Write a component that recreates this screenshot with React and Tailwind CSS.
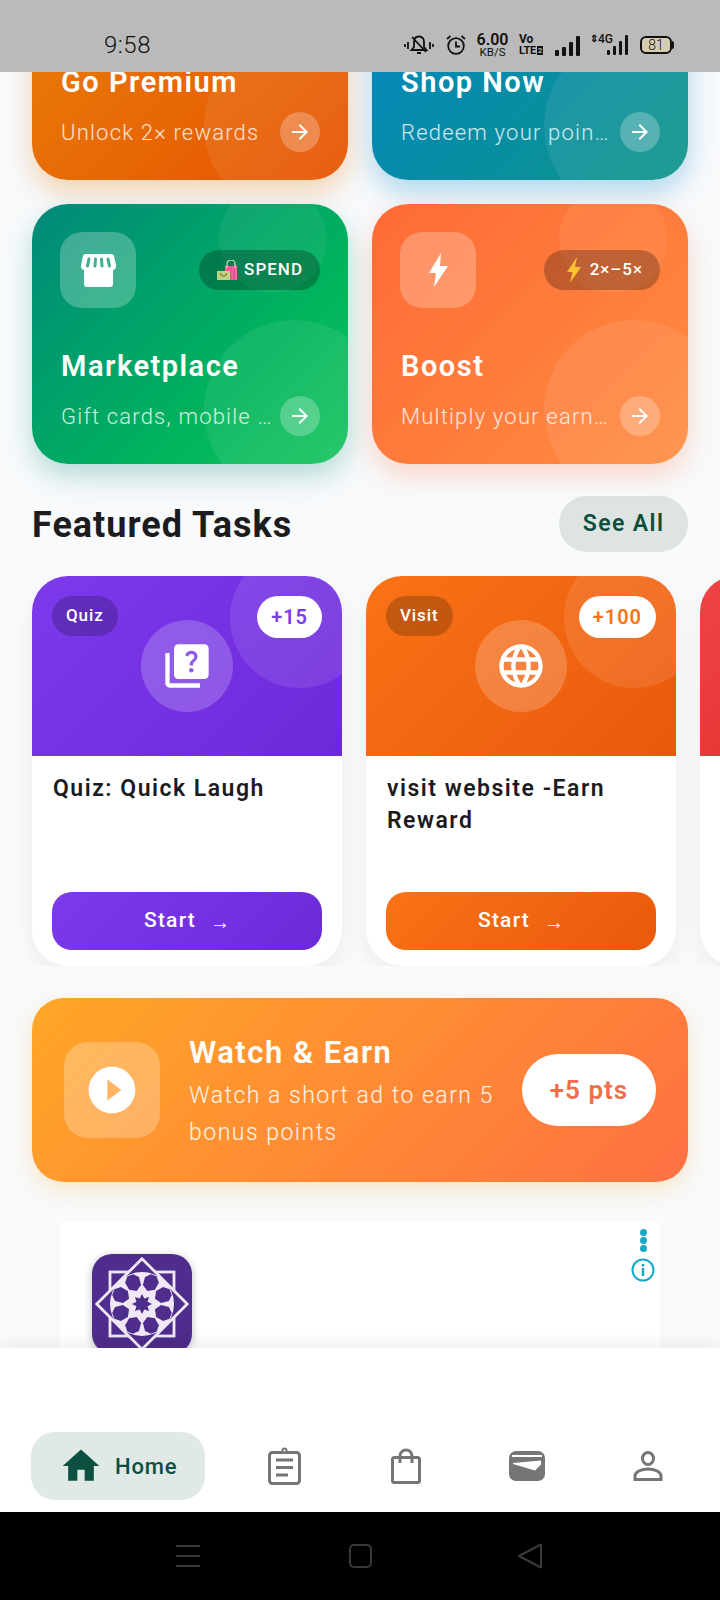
import {
  MdArrowForward,
  MdHome,
  MdLanguage,
  MdPlayCircleFilled,
  MdQuiz,
} from "react-icons/md";

function Bars({ heights, bar = "w-[4px]" }) {
  return (
    <div className="flex items-end gap-[3px]">
      {heights.map((h, i) => (
        <div key={i} className={`${bar} rounded-[1px] bg-[#111]`} style={{ height: h }} />
      ))}
    </div>
  );
}

function StatusBar() {
  return (
    <div className="relative z-20 flex h-[72px] shrink-0 items-center bg-[#b9bab9] pl-[104px] pr-[46px] pt-[18px] text-[#111]">
      <span className="text-[24px] font-light leading-none tracking-[0.5px]">9:58</span>
      <div className="ml-auto flex items-center">
        <svg viewBox="0 0 30 20" className="h-[20px] w-[30px]" fill="none" stroke="#111" strokeWidth="1.8">
          <path d="M1 9v3M4 7v7M26 7v7M29 9v3" />
          <path d="M15 1.500c-3.500 0-5 2.500-5 5.500v5l-2.500 3h15L20 12V7c0-3-1.500-5.500-5-5.500zM13 18h4M8 2l14 15" />
        </svg>
        <svg viewBox="0 0 20 20" className="ml-[12px] h-[20px] w-[20px]" fill="none" stroke="#111" strokeWidth="1.8">
          <circle cx="10" cy="11" r="7.800" />
          <path d="M10 6.500V11.500H14M1 4l3.500-3M19 4l-3.500-3" />
        </svg>
        <div className="ml-[10px] flex w-[33px] flex-col items-center">
          <span className="text-[16px] font-semibold leading-[14px]">6.00</span>
          <span className="text-[11.5px] leading-[11px]">KB/S</span>
        </div>
        <div className="ml-[10px] flex w-[25px] flex-col font-bold">
          <span className="text-[12px] leading-[11px]">Vo</span>
          <span className="flex items-center text-[11px] leading-[11px] tracking-[-0.3px]">
            LTE
            <span className="ml-[1px] bg-[#111] px-[1px] text-[8px] leading-[9px] text-[#b9bab9]">2</span>
          </span>
        </div>
        <div className="ml-[11px] mt-[2px]">
          <Bars heights={[6, 9, 14, 20]} />
        </div>
        <div className="relative ml-[10px] flex h-[20px] w-[38px] items-end justify-end">
          <span className="absolute left-0 top-[-2px] text-[10px] font-bold leading-[12px]">⇕</span>
          <span className="absolute left-[8px] top-[-2px] text-[12px] font-medium leading-[12px]">4G</span>
          <Bars heights={[5, 9, 14, 20]} bar="w-[3px]" />
        </div>
        <div className="ml-[12px] flex items-center">
          <div className="flex h-[18px] w-[32px] items-center justify-center rounded-[6px] border-2 border-[#111] bg-[#d5cdb0] text-[14px] font-light leading-none">
            81
          </div>
          <div className="h-[8px] w-[2px] rounded-r-[2px] bg-[#111]" />
        </div>
      </div>
    </div>
  );
}

function ActionCard({ title, sub, icon, badge, className }) {
  return (
    <div className={`relative flex h-[260px] flex-col overflow-hidden rounded-[36px] p-[28px] text-white ${className}`}>
      <div className="absolute right-[21px] top-[-19px] h-[108px] w-[108px] rounded-full bg-white/[0.06]" />
      <div className="absolute bottom-[-36px] right-[-36px] h-[180px] w-[180px] rounded-full bg-white/[0.08]" />
      <div className="relative flex h-[76px] items-center justify-between">
        {icon && (
          <div className="flex h-[76px] w-[76px] items-center justify-center rounded-[22px] bg-white/25">{icon}</div>
        )}
        {badge}
      </div>
      <div className="relative mt-auto pl-[1px] text-[29px] font-semibold leading-[34px] tracking-[1.5px]">{title}</div>
      <div className="relative mt-[13px] flex h-[40px] items-center gap-[8px]">
        <div className="min-w-0 flex-1 truncate pl-[1px] text-[22px] font-light tracking-[1.2px] text-white/80">{sub}</div>
        <div className="flex h-[40px] w-[40px] shrink-0 items-center justify-center rounded-full bg-white/25">
          <MdArrowForward className="h-[24px] w-[24px]" />
        </div>
      </div>
    </div>
  );
}

function TaskCard({ tag, points, title, icon, head, btn, pointsColor }) {
  return (
    <div className="relative flex h-[390px] w-[310px] shrink-0 flex-col overflow-hidden rounded-[36px] bg-white shadow-[0_8px_24px_rgba(0,0,0,0.06)]">
      <div className={`relative h-[180px] shrink-0 overflow-hidden ${head}`}>
        <div className="absolute right-[-28px] top-[-28px] h-[140px] w-[140px] rounded-full bg-white/10" />
        {tag && (
          <div className="absolute left-[20px] top-[20px] flex h-[40px] items-center rounded-full bg-black/20 px-[14px] text-[17px] font-medium tracking-[0.9px] text-white">
            {tag}
          </div>
        )}
        {points && (
          <div className={`absolute right-[20px] top-[20px] flex h-[42px] items-center rounded-full bg-white px-[14px] text-[20px] font-semibold tracking-[1px] ${pointsColor}`}>
            {points}
          </div>
        )}
        {icon && (
          <div className="absolute left-[109px] top-[44px] flex h-[92px] w-[92px] items-center justify-center rounded-full bg-white/20 text-white">
            {icon}
          </div>
        )}
      </div>
      {title && (
        <div className="flex flex-1 flex-col px-[20px] pb-[16px] pt-[17px]">
          <div className="pl-[1px] text-[23px] font-semibold leading-[32px] tracking-[1.5px] text-[#1c1c1e]">{title}</div>
          <div className={`mt-auto flex h-[58px] items-center justify-center gap-[14px] rounded-[20px] text-[21px] font-medium tracking-[1.2px] text-white ${btn}`}>
            <span>Start</span>
            <span className="mt-[1px] font-['Liberation_Sans',sans-serif] text-[20px] tracking-normal">→</span>
          </div>
        </div>
      )}
    </div>
  );
}

function StarLogo() {
  const angles = [0, 45, 90, 135, 180, 225, 270, 315];
  const star = [];
  for (let i = 0; i < 16; i++) {
    const r = i % 2 ? 6 : 10;
    const a = (i * 22.5 * Math.PI) / 180;
    star.push(`${50 + r * Math.cos(a)},${50 + r * Math.sin(a)}`);
  }
  return (
    <svg viewBox="0 0 100 100" className="h-full w-full">
      <rect width="100" height="100" fill="#4f2d8c" />
      <g fill="#4f2d8c" stroke="#f0e8f6" strokeWidth="2.800">
        <rect x="18" y="18" width="64" height="64" />
        <rect x="18" y="18" width="64" height="64" transform="rotate(45 50 50)" />
      </g>
      <circle cx="50" cy="50" r="32" fill="#f0e8f6" />
      {angles.map((a) => (
        <polygon
          key={a}
          points="64,50 68,43.500 76,42.500 81,47 81,53 76,57.500 68,56.500"
          fill="#4f2d8c"
          transform={`rotate(${a + 22.5} 50 50)`}
        />
      ))}
      <polygon points={star.join(" ")} fill="#4f2d8c" />
    </svg>
  );
}

function SpendBags() {
  return (
    <svg viewBox="0 0 20 20" className="h-[20px] w-[20px] shrink-0">
      <rect x="8" y="6" width="12" height="14" fill="#ee6a9f" />
      <path d="M11 6V20M14 6V20M17 6V20" stroke="#d14d87" strokeWidth="1" />
      <path d="M10 8V4a4 4 0 0 1 8 0v4" fill="none" stroke="#d9e6c0" strokeWidth="1.200" />
      <rect x="0" y="11" width="13" height="9" fill="#bcd67e" />
      <path d="M3.500 13a3 3 0 0 0 6 0" fill="none" stroke="#9a6b4f" strokeWidth="1.200" />
    </svg>
  );
}

function BoltEmoji() {
  return (
    <svg viewBox="0 0 16 26" className="ml-[3px] h-[26px] w-[18px] shrink-0">
      <path d="M11 0 1 15h5.500L4 26 15 10H9l2-10z" fill="#fbc02d" />
    </svg>
  );
}

function Badge({ children }) {
  return (
    <div className="flex h-[40px] items-center gap-[7px] rounded-full bg-black/25 pl-[18px] pr-[17px] text-[17px] font-medium tracking-[1px] text-white">
      {children}
    </div>
  );
}

function StoreIcon() {
  return (
    <svg viewBox="0 0 35 33" className="h-[33px] w-[35px]" fill="#fff">
      <path d="M5 0h25a3 3 0 0 1 3 2l2 9a4 4 0 0 1-3 5v14a3 3 0 0 1-3 3H6a3 3 0 0 1-3-3V16a4 4 0 0 1-3-5l2-9a3 3 0 0 1 3-2z" />
      <path d="M8 5 6.500 12M14.500 5l-.500 7M20.500 5l.500 7M27 5l1.500 7" stroke="#46ad90" strokeWidth="3" strokeLinecap="round" />
    </svg>
  );
}

function BoltIcon() {
  return (
    <svg viewBox="0 0 19 34" className="h-[34px] w-[19px]" fill="#fff">
      <path d="M12 0 0 20h7L5 34l14-21h-8l1-13z" strokeLinejoin="round" />
    </svg>
  );
}

function ClipboardIcon() {
  return (
    <svg viewBox="0 0 33 38" className="h-[38px] w-[33px]" fill="none" stroke="#757575" strokeWidth="3">
      <rect x="1.500" y="5.500" width="30" height="31" rx="3" />
      <circle cx="16.500" cy="3.500" r="2" fill="#fff" strokeWidth="2" />
      <path d="M8 13h17M8 20.500h17M8 28h12" />
    </svg>
  );
}

function BagIcon() {
  return (
    <svg viewBox="0 0 30 36" className="h-[36px] w-[30px]" fill="none" stroke="#757575" strokeWidth="3">
      <rect x="1.500" y="9.500" width="27" height="25" rx="2" />
      <path d="M9 15V8a6 6 0 0 1 12 0v7" />
    </svg>
  );
}

function WalletIcon() {
  return (
    <svg viewBox="0 0 36 30" className="h-[30px] w-[36px]">
      <rect width="36" height="30" rx="7" fill="#757575" />
      <path d="M3 5h30" stroke="#fff" strokeWidth="2" />
      <path d="M4 12 32 9.500v4l-6 6L4 13z" fill="#fff" />
    </svg>
  );
}

function PersonIcon() {
  return (
    <svg viewBox="0 0 30 30" className="h-[30px] w-[30px]" fill="none" stroke="#757575" strokeWidth="3">
      <ellipse cx="15" cy="7.500" rx="5.500" ry="6" />
      <path d="M2 28.500V25c0-4 6-7 13-7s13 3 13 7v3.500z" />
    </svg>
  );
}

function InfoIcon() {
  return (
    <svg viewBox="0 0 24 24" className="mt-[5px] h-[24px] w-[24px]" fill="none" stroke="#13a9c9" strokeWidth="2">
      <circle cx="12" cy="12" r="10.500" />
      <path d="M12 10v8M12 6v2.500" strokeWidth="2.500" />
    </svg>
  );
}

export default function App() {
  return (
    <div className="relative flex h-[1600px] w-[720px] flex-col overflow-hidden bg-white font-['Roboto',sans-serif]">
      <StatusBar />

      <div className="h-[1276px] shrink-0 overflow-hidden bg-[#f8fafc]">
        <div className="mx-8 -mt-[152px] grid grid-cols-2 gap-6">
          <ActionCard
            title="Go Premium"
            sub="Unlock 2× rewards"
            className="bg-[linear-gradient(135deg,#e8850c,#e65100)] shadow-[0_12px_28px_rgba(230,120,0,0.3)]"
          />
          <ActionCard
            title="Shop Now"
            sub="Redeem your points today"
            className="bg-[linear-gradient(135deg,#0284c7,#0d9488)] shadow-[0_12px_28px_rgba(2,132,199,0.3)]"
          />
          <ActionCard
            title="Marketplace"
            sub="Gift cards, mobile top-ups"
            icon={<StoreIcon />}
            badge={
              <Badge>
                <SpendBags />
                SPEND
              </Badge>
            }
            className="bg-[linear-gradient(135deg,#00897b,#00b35c_65%,#16c45e)] shadow-[0_12px_28px_rgba(0,137,123,0.28)]"
          />
          <ActionCard
            title="Boost"
            sub="Multiply your earnings"
            icon={<BoltIcon />}
            badge={
              <Badge>
                <BoltEmoji />
                2×–5×
              </Badge>
            }
            className="bg-[linear-gradient(135deg,#ff6b35,#ff8c42)] shadow-[0_12px_28px_rgba(255,107,53,0.25)]"
          />
        </div>

        <div className="mx-8 mt-8 flex h-[56px] items-center justify-between">
          <h2 className="mt-[2px] text-[36px] font-bold leading-none tracking-[1px] text-[#1c1c1e]">Featured Tasks</h2>
          <div className="flex h-[56px] w-[129px] items-center justify-center rounded-full bg-[#dde4e2] text-[23px] font-semibold tracking-[1.4px] text-[#0b4f3c]">
            See All
          </div>
        </div>

        <div className="mt-6 flex gap-6 overflow-hidden pl-8">
          <TaskCard
            tag="Quiz"
            points="+15"
            title="Quiz: Quick Laugh"
            icon={<MdQuiz className="h-[52px] w-[52px]" />}
            head="bg-[linear-gradient(135deg,#7c3aed,#6d28d9)]"
            btn="bg-[linear-gradient(135deg,#7c3aed,#6d28d9)]"
            pointsColor="text-[#7c3aed]"
          />
          <TaskCard
            tag="Visit"
            points="+100"
            title="visit website -Earn Reward"
            icon={<MdLanguage className="h-[52px] w-[52px]" />}
            head="bg-[linear-gradient(135deg,#f97316,#ea580c)]"
            btn="bg-[linear-gradient(135deg,#f97316,#ea580c)]"
            pointsColor="text-[#f97316]"
          />
          <TaskCard head="bg-[linear-gradient(135deg,#ef4444,#dc2626)]" />
        </div>

        <div className="mx-8 mt-8 flex h-[184px] items-center rounded-[32px] bg-[linear-gradient(135deg,#ffa726,#ff7043)] px-8 text-white shadow-[0_8px_24px_rgba(255,167,38,0.25)]">
          <div className="mr-[29px] flex h-[96px] w-[96px] shrink-0 items-center justify-center rounded-[24px] bg-white/25">
            <MdPlayCircleFilled className="h-[56px] w-[56px]" />
          </div>
          <div className="w-[320px] shrink-0">
            <div className="mt-[6px] text-[31px] font-semibold leading-[36px] tracking-[1.5px]">Watch &amp; Earn</div>
            <div className="mt-[6px] text-[23px] font-light leading-[37px] tracking-[1.5px] text-white/90">
              Watch a short ad to earn 5 bonus points
            </div>
          </div>
          <div className="ml-auto flex h-[72px] w-[134px] shrink-0 items-center justify-center rounded-full bg-white text-[26px] font-semibold tracking-[1px] text-[#f06e4a]">
            +5 pts
          </div>
        </div>

        <div className="relative mx-[60px] mt-10 h-[160px] bg-white pl-8 pt-8">
          <div className="h-[100px] w-[100px] overflow-hidden rounded-[20px] shadow-[0_2px_8px_rgba(0,0,0,0.25)]">
            <StarLogo />
          </div>
          <div className="absolute right-[5px] top-[6px] flex w-[24px] flex-col items-center">
            <div className="flex flex-col gap-[1px] py-[1px]">
              <div className="h-[7px] w-[7px] rounded-full bg-[#13a9c9]" />
              <div className="h-[7px] w-[7px] rounded-full bg-[#13a9c9]" />
              <div className="h-[7px] w-[7px] rounded-full bg-[#13a9c9]" />
            </div>
            <InfoIcon />
          </div>
        </div>
      </div>

      <div className="relative z-10 flex h-[164px] shrink-0 items-center bg-white pl-[31px] pt-[72px] shadow-[0_-6px_18px_rgba(0,0,0,0.06)]">
        <div className="flex h-[68px] w-[174px] items-center gap-[12px] rounded-[24px] bg-[#e0e9e6] pl-[28px] text-[#0b5040]">
          <MdHome className="h-[44px] w-[44px] shrink-0" />
          <span className="text-[22px] font-medium tracking-[0.8px]">Home</span>
        </div>
        <div className="ml-[19px] flex w-[121px] justify-center">
          <ClipboardIcon />
        </div>
        <div className="flex w-[121px] justify-center">
          <BagIcon />
        </div>
        <div className="flex w-[121px] justify-center">
          <WalletIcon />
        </div>
        <div className="flex w-[121px] justify-center">
          <PersonIcon />
        </div>
      </div>

      <div className="relative flex h-[88px] shrink-0 items-center bg-black pl-[176px]">
        <div className="flex w-[24px] flex-col gap-[8px]">
          <div className="h-[2px] bg-[#3a3a3a]" />
          <div className="h-[2px] bg-[#3a3a3a]" />
          <div className="h-[2px] bg-[#3a3a3a]" />
        </div>
        <div className="ml-[149px] h-[24px] w-[23px] rounded-[5px] border-2 border-[#3a3a3a]" />
        <svg viewBox="0 0 26 26" className="ml-[145px] h-[26px] w-[26px]" fill="none" stroke="#3a3a3a" strokeWidth="2" strokeLinejoin="round">
          <path d="M24 1.500v23L2 13z" />
        </svg>
      </div>
    </div>
  );
}
